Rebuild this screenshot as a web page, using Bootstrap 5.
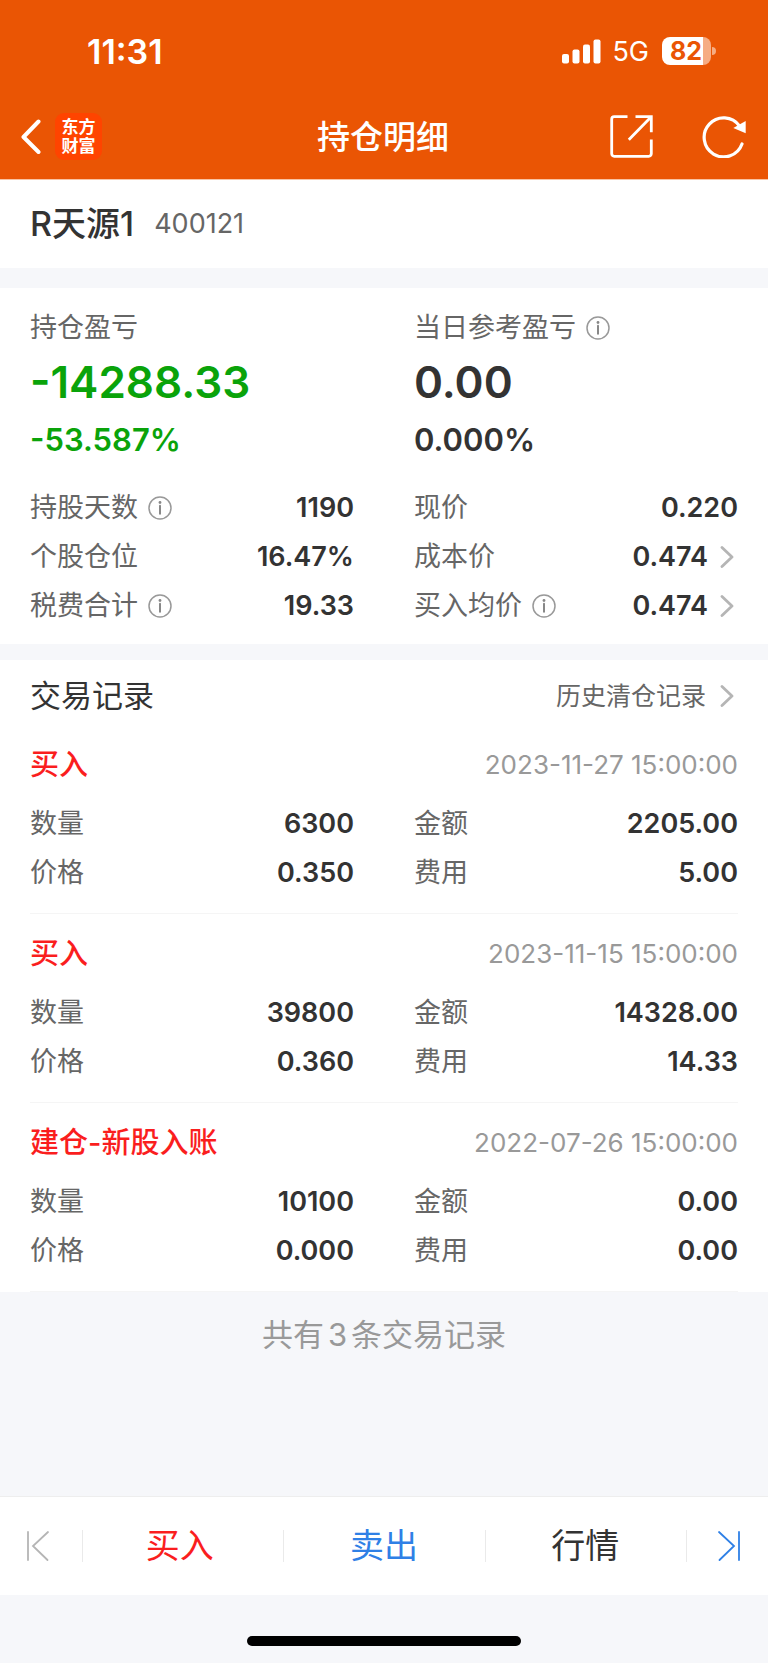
<!DOCTYPE html>
<html lang="zh-CN">
<head>
<meta charset="utf-8">
<meta name="viewport" content="width=device-width, initial-scale=1">
<title>持仓明细</title>
<link href="https://cdn.jsdelivr.net/npm/bootstrap@5.3.0/dist/css/bootstrap.min.css" rel="stylesheet">
<style>
:root{--brand:#ea5504;--ink:#333;--sub:#666;--faint:#999;--page:#f6f7fa;--hair:#f5f5f5;--buy:#fa1e1e;--sell:#2f80e6;--gain:#0aa30a}
body{font-family:Inter,"Noto Sans CJK SC",sans-serif;color:var(--ink);background:var(--page);font-size:27px;line-height:48px}
svg{display:block;flex:none}
a,button{color:inherit;text-decoration:none}
.plain{border:0;background:none;padding:0}
.topbar{background:var(--brand);color:#fff;border-bottom:1px solid #f9c3a3}
.status{height:94px;padding:8px 52px 0 87px}
.clock,.network{padding-top:2px}
.clock{font-size:34px;font-weight:600}
.network{margin:0 13px 0 11px}
.battery{width:49px;height:28px;border-radius:8px;background:linear-gradient(90deg,#fff 84%,#f6ac83 84%);color:var(--brand);font-size:25px;font-weight:700;line-height:28px;padding-right:1px}
.battery-tip{width:4px;height:8px;margin-left:1px;border-radius:0 4px 4px 0;background:#f6ac83}
.titlebar{height:85px;padding:0 22px 0 20px}
.titlebar h1{font-size:33px;font-weight:500;line-height:48px}
.logo{width:47px;height:47px;border-radius:9px;background:#ff4400;font-size:17px;font-weight:700;line-height:19px;margin-left:14px}
.panel{background:#fff;padding-left:30px;padding-right:30px}
.panel .row{--bs-gutter-x:60px}
.stock{height:88px;margin-bottom:20px}
.stock h2{font-size:34px;font-weight:500;line-height:48px}
.code{font-size:27px;color:var(--sub);margin-left:20px}
.label{color:var(--sub);font-weight:400}
.summary{padding-top:17px;padding-bottom:14px;margin-bottom:16px}
.summary .label{line-height:46px}
.big{font-size:44px;font-weight:600;line-height:63px}
.pct{font-size:31px;font-weight:600;line-height:52px;margin-bottom:17px}
.gain{color:var(--gain)}
.pair{height:49px}
.num{font-weight:600}
.info{margin-left:10px}
.more{margin-left:12px;margin-right:4px}
.records{padding-top:7px}
.records-head{height:58px}
.records-head h2{font-size:31px;font-weight:400;line-height:48px}
.history{font-size:25px;color:var(--sub)}
.history .more{margin-left:14px}
.record{padding:17px 0 16px;border-bottom:1px solid var(--hair)}
.record-head{height:46px;margin-bottom:11px}
.record-head h3{font-size:29px;font-weight:500;line-height:46px;color:var(--buy)}
.record time{font-size:26px;color:var(--faint)}
.total{font-size:31px;line-height:46px;color:var(--faint);padding:20px 0 40px}
.total span{margin:0 4px}
.actions{background:#fff;border-top:1px solid #eee;height:99px}
.actions button{height:48px;font-size:34px;line-height:48px}
.actions .edge{width:82px}
.actions button+button{position:relative}
.actions button+button::before{content:"";position:absolute;left:0;top:8px;bottom:8px;width:1px;background:#eaeaea}
.actions .col{padding:0 3px}
.actions .buy{color:var(--buy);padding:0 6px 0 0}
.actions .sell{color:var(--sell)}
.actions .edge:first-child{padding-right:8px}
.actions .edge:last-child{padding-left:6px}
.actions button svg{margin:0 auto}
.home{height:68px;padding-top:41px}
.home div{width:274px;height:10px;border-radius:5px;background:#000}
</style>
</head>
<body class="d-flex flex-column min-vh-100">
<svg width="0" height="0" class="position-absolute" aria-hidden="true">
  <symbol id="i-info" viewBox="0 0 24 24"><circle cx="12" cy="12" r="11" fill="none" stroke="#999" stroke-width="1.5"/><circle cx="12" cy="6.5" r="1.4" fill="#888"/><path d="M12 9.8v8" stroke="#888" stroke-width="2" stroke-linecap="round"/></symbol>
  <symbol id="i-more" viewBox="0 0 14 22"><path d="M2 1.500 12 11 2 20.500" fill="none" stroke="#b5b5b5" stroke-width="2.800" stroke-linecap="round" stroke-linejoin="round"/></symbol>
</svg>

<header class="topbar">
  <div class="status d-flex align-items-center justify-content-between">
    <span class="clock">11:31</span>
    <div class="d-flex align-items-center">
      <svg width="39" height="25" viewBox="0 0 39 25" fill="#fff"><rect x="0" y="15" width="7" height="9.500" rx="2"/><rect x="10.500" y="10.500" width="7" height="14" rx="2"/><rect x="21" y="5.500" width="7" height="19" rx="2"/><rect x="31.500" y="0.500" width="7" height="24" rx="2"/></svg>
      <span class="network">5G</span>
      <span class="battery text-center">82</span><span class="battery-tip"></span>
    </div>
  </div>
  <nav class="titlebar d-flex align-items-center" aria-label="导航">
    <div class="d-flex align-items-center w-25">
      <button class="plain" aria-label="返回"><svg width="21" height="36" viewBox="0 0 21 36"><path d="M18.500 2.500 3.500 18l15 15" fill="none" stroke="#fff" stroke-width="4" stroke-linecap="round" stroke-linejoin="round"/></svg></button>
      <a href="#" class="logo d-flex align-items-center justify-content-center text-center">东方<br>财富</a>
    </div>
    <h1 class="flex-fill text-center mb-0">持仓明细</h1>
    <div class="d-flex align-items-center justify-content-end w-25">
      <button class="plain me-5" aria-label="分享"><svg width="43" height="43" viewBox="0 0 43 43" fill="none" stroke="#fff" stroke-width="2.800"><path d="M17.500 1.700H4.200a2.500 2.500 0 0 0-2.500 2.500v34.600a2.500 2.500 0 0 0 2.500 2.500h34.600a2.500 2.500 0 0 0 2.500-2.500V24.500M25.500 1.700h15.800v15.500M41 2 18.800 24.800"/></svg></button>
      <button class="plain" aria-label="刷新"><svg width="45" height="43" viewBox="0 0 45 43"><path d="M41 29A19.500 19.500 0 1 1 38.500 11" fill="none" stroke="#fff" stroke-width="3.200" stroke-linecap="round"/><path d="M44.700 6v12.300L32.300 13z" fill="#fff"/></svg></button>
    </div>
  </nav>
</header>

<main class="flex-grow-1">
  <section class="panel stock d-flex align-items-center">
    <h2 class="mb-0">R天源1</h2><span class="code">400121</span>
  </section>

  <section class="panel summary">
    <div class="row">
      <div class="col-6">
        <div class="label">持仓盈亏</div>
        <div class="big gain">-14288.33</div>
        <div class="pct gain">-53.587%</div>
      </div>
      <div class="col-6">
        <div class="label d-flex align-items-center">当日参考盈亏<svg class="info" width="24" height="24"><use href="#i-info"/></svg></div>
        <div class="big">0.00</div>
        <div class="pct">0.000%</div>
      </div>
    </div>
    <dl class="row mb-0">
      <div class="col-6 pair d-flex align-items-center justify-content-between"><dt class="label d-flex align-items-center">持股天数<svg class="info" width="24" height="24"><use href="#i-info"/></svg></dt><dd class="num mb-0">1190</dd></div>
      <div class="col-6 pair d-flex align-items-center justify-content-between"><dt class="label">现价</dt><dd class="num mb-0">0.220</dd></div>
      <div class="col-6 pair d-flex align-items-center justify-content-between"><dt class="label">个股仓位</dt><dd class="num mb-0">16.47%</dd></div>
      <div class="col-6 pair d-flex align-items-center justify-content-between"><dt class="label">成本价</dt><dd class="num mb-0"><a href="#" class="d-flex align-items-center">0.474<svg class="more" width="14" height="22"><use href="#i-more"/></svg></a></dd></div>
      <div class="col-6 pair d-flex align-items-center justify-content-between"><dt class="label d-flex align-items-center">税费合计<svg class="info" width="24" height="24"><use href="#i-info"/></svg></dt><dd class="num mb-0">19.33</dd></div>
      <div class="col-6 pair d-flex align-items-center justify-content-between"><dt class="label d-flex align-items-center">买入均价<svg class="info" width="24" height="24"><use href="#i-info"/></svg></dt><dd class="num mb-0"><a href="#" class="d-flex align-items-center">0.474<svg class="more" width="14" height="22"><use href="#i-more"/></svg></a></dd></div>
    </dl>
  </section>

  <section class="panel records">
    <div class="records-head d-flex align-items-center justify-content-between">
      <h2 class="mb-0">交易记录</h2>
      <a href="#" class="history d-flex align-items-center">历史清仓记录<svg class="more" width="14" height="22"><use href="#i-more"/></svg></a>
    </div>

    <article class="record">
      <div class="record-head d-flex align-items-center justify-content-between"><h3 class="mb-0">买入</h3><time>2023-11-27 15:00:00</time></div>
      <dl class="row mb-0">
        <div class="col-6 pair d-flex align-items-center justify-content-between"><dt class="label">数量</dt><dd class="num mb-0">6300</dd></div>
        <div class="col-6 pair d-flex align-items-center justify-content-between"><dt class="label">金额</dt><dd class="num mb-0">2205.00</dd></div>
        <div class="col-6 pair d-flex align-items-center justify-content-between"><dt class="label">价格</dt><dd class="num mb-0">0.350</dd></div>
        <div class="col-6 pair d-flex align-items-center justify-content-between"><dt class="label">费用</dt><dd class="num mb-0">5.00</dd></div>
      </dl>
    </article>

    <article class="record">
      <div class="record-head d-flex align-items-center justify-content-between"><h3 class="mb-0">买入</h3><time>2023-11-15 15:00:00</time></div>
      <dl class="row mb-0">
        <div class="col-6 pair d-flex align-items-center justify-content-between"><dt class="label">数量</dt><dd class="num mb-0">39800</dd></div>
        <div class="col-6 pair d-flex align-items-center justify-content-between"><dt class="label">金额</dt><dd class="num mb-0">14328.00</dd></div>
        <div class="col-6 pair d-flex align-items-center justify-content-between"><dt class="label">价格</dt><dd class="num mb-0">0.360</dd></div>
        <div class="col-6 pair d-flex align-items-center justify-content-between"><dt class="label">费用</dt><dd class="num mb-0">14.33</dd></div>
      </dl>
    </article>

    <article class="record">
      <div class="record-head d-flex align-items-center justify-content-between"><h3 class="mb-0">建仓-新股入账</h3><time>2022-07-26 15:00:00</time></div>
      <dl class="row mb-0">
        <div class="col-6 pair d-flex align-items-center justify-content-between"><dt class="label">数量</dt><dd class="num mb-0">10100</dd></div>
        <div class="col-6 pair d-flex align-items-center justify-content-between"><dt class="label">金额</dt><dd class="num mb-0">0.00</dd></div>
        <div class="col-6 pair d-flex align-items-center justify-content-between"><dt class="label">价格</dt><dd class="num mb-0">0.000</dd></div>
        <div class="col-6 pair d-flex align-items-center justify-content-between"><dt class="label">费用</dt><dd class="num mb-0">0.00</dd></div>
      </dl>
    </article>
  </section>

  <p class="total text-center mb-0">共有<span>3</span>条交易记录</p>
</main>

<footer>
  <div class="actions d-flex align-items-center">
    <button class="plain edge" aria-label="上一个"><svg width="26" height="32" viewBox="0 0 26 32" fill="none" stroke="#b5b5b5" stroke-width="1.800" stroke-linecap="round"><path d="M4 2v28M24 2 9 16l14.500 14"/></svg></button>
    <button class="plain col buy">买入</button>
    <button class="plain col sell">卖出</button>
    <button class="plain col">行情</button>
    <button class="plain edge" aria-label="下一个"><svg width="26" height="32" viewBox="0 0 26 32" fill="none" stroke="#2f80e6" stroke-width="1.800" stroke-linecap="round"><path d="M22 2v28M2 2l15 14L2.500 30"/></svg></button>
  </div>
  <div class="home"><div class="mx-auto"></div></div>
</footer>
<script src="https://cdn.jsdelivr.net/npm/bootstrap@5.3.0/dist/js/bootstrap.bundle.min.js"></script>
</body>
</html>
